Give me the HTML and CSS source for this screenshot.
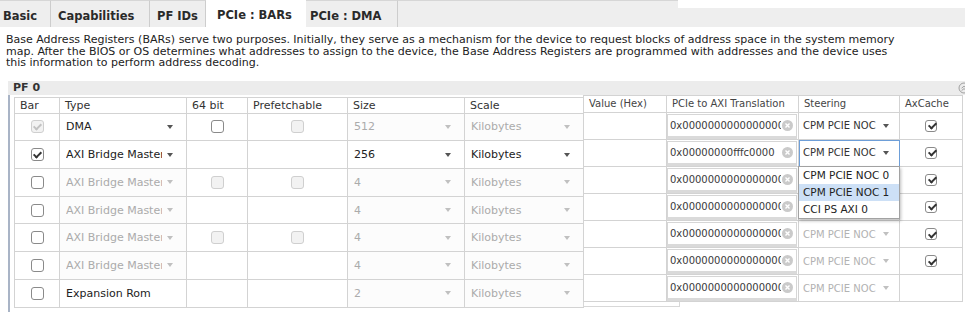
FILE: index.html
```html
<!DOCTYPE html>
<html lang="en">
<head>
  <meta charset="UTF-8" />
  <title>PCIe : BARs</title>
  <link rel="stylesheet" href="styles.css">
</head>
<body>

<div class="tab-bar">
  <div class="tab tab-basic">Basic</div>
  <div class="tab tab-caps">Capabilities</div>
  <div class="tab tab-ids">PF IDs</div>
  <div class="tab tab-bars active">PCIe : BARs</div>
  <div class="tab tab-dma">PCIe : DMA</div>
  <div class="tab-fill"></div>
  <div class="tab-fill tab-fill-alt"></div>
</div>

<p class="intro">Base Address Registers (BARs) serve two purposes. Initially, they serve as a mechanism for the device to request blocks of address space in the system memory<br>map. After the BIOS or OS determines what addresses to assign to the device, the Base Address Registers are programmed with addresses and the device uses<br>this information to perform address decoding.</p>

<div class="pf-head">
  <span>PF 0</span>
  <svg class="collapse" width="8" height="12" viewBox="0 0 8 12"><circle cx="7" cy="6" r="5" fill="none" stroke="#a0a0a0"/><path d="M4.6 6.2l2.4-2 2.4 2M4.6 8.6l2.4-2 2.4 2" fill="none" stroke="#a0a0a0"/></svg>
</div>

<div class="pf-body">
  <!-- Bar / Type / 64 bit / Prefetchable / Size / Scale -->
  <div class="bars">
    <div class="cell head">Bar</div>
    <div class="cell head">Type</div>
    <div class="cell head">64 bit</div>
    <div class="cell head">Prefetchable</div>
    <div class="cell head">Size</div>
    <div class="cell head">Scale</div>

    <div class="cell center"><span class="cb off on"></span></div>
    <div class="cell sel"><span class="txt">DMA</span><i class="caret"></i></div>
    <div class="cell center"><span class="cb"></span></div>
    <div class="cell center"><span class="cb off"></span></div>
    <div class="cell sel off"><span class="txt">512</span><i class="caret"></i></div>
    <div class="cell sel off"><span class="txt">Kilobytes</span><i class="caret"></i></div>

    <div class="cell center"><span class="cb on"></span></div>
    <div class="cell sel"><span class="txt">AXI Bridge Master</span><i class="caret"></i></div>
    <div class="cell"></div>
    <div class="cell"></div>
    <div class="cell sel"><span class="txt">256</span><i class="caret"></i></div>
    <div class="cell sel"><span class="txt">Kilobytes</span><i class="caret"></i></div>

    <div class="cell center"><span class="cb"></span></div>
    <div class="cell sel off"><span class="txt">AXI Bridge Master</span><i class="caret"></i></div>
    <div class="cell center"><span class="cb off"></span></div>
    <div class="cell center"><span class="cb off"></span></div>
    <div class="cell sel off"><span class="txt">4</span><i class="caret"></i></div>
    <div class="cell sel off"><span class="txt">Kilobytes</span><i class="caret"></i></div>

    <div class="cell center"><span class="cb"></span></div>
    <div class="cell sel off"><span class="txt">AXI Bridge Master</span><i class="caret"></i></div>
    <div class="cell"></div>
    <div class="cell"></div>
    <div class="cell sel off"><span class="txt">4</span><i class="caret"></i></div>
    <div class="cell sel off"><span class="txt">Kilobytes</span><i class="caret"></i></div>

    <div class="cell center"><span class="cb"></span></div>
    <div class="cell sel off"><span class="txt">AXI Bridge Master</span><i class="caret"></i></div>
    <div class="cell center"><span class="cb off"></span></div>
    <div class="cell center"><span class="cb off"></span></div>
    <div class="cell sel off"><span class="txt">4</span><i class="caret"></i></div>
    <div class="cell sel off"><span class="txt">Kilobytes</span><i class="caret"></i></div>

    <div class="cell center"><span class="cb"></span></div>
    <div class="cell sel off"><span class="txt">AXI Bridge Master</span><i class="caret"></i></div>
    <div class="cell"></div>
    <div class="cell"></div>
    <div class="cell sel off"><span class="txt">4</span><i class="caret"></i></div>
    <div class="cell sel off"><span class="txt">Kilobytes</span><i class="caret"></i></div>

    <div class="cell center"><span class="cb"></span></div>
    <div class="cell plain">Expansion Rom</div>
    <div class="cell"></div>
    <div class="cell"></div>
    <div class="cell sel off"><span class="txt">2</span><i class="caret"></i></div>
    <div class="cell sel off"><span class="txt">Kilobytes</span><i class="caret"></i></div>
  </div>

  <!-- Value / Translation / Steering / AxCache -->
  <div class="ext">
    <div class="bars-ext">
      <div class="cell ext-head">Value (Hex)</div>
      <div class="cell ext-head">PCIe to AXI Translation</div>
      <div class="cell ext-head">Steering</div>
      <div class="cell ext-head">AxCache</div>

      <div class="cell"></div>
      <div class="cell addr-cell"><div class="addr"><span>0x0000000000000000</span><svg class="clear" width="11" height="11" viewBox="0 0 11 11"><circle cx="5.5" cy="5.5" r="5.5" fill="#cacaca"/><path d="M3.5 3.5l4 4M7.5 3.5l-4 4" stroke="#fff" stroke-width="1.4"/></svg></div></div>
      <div class="cell sel steer"><span class="txt">CPM PCIE NOC</span><i class="caret"></i></div>
      <div class="cell center"><span class="cb sm on"></span></div>

      <div class="cell"></div>
      <div class="cell addr-cell"><div class="addr"><span>0x00000000fffc0000</span><svg class="clear" width="11" height="11" viewBox="0 0 11 11"><circle cx="5.5" cy="5.5" r="5.5" fill="#cacaca"/><path d="M3.5 3.5l4 4M7.5 3.5l-4 4" stroke="#fff" stroke-width="1.4"/></svg></div></div>
      <div class="cell sel steer focus">
        <span class="txt">CPM PCIE NOC</span><i class="caret"></i>
        <div class="menu">
          <div>CPM PCIE NOC 0</div>
          <div class="hi">CPM PCIE NOC 1</div>
          <div>CCI PS AXI 0</div>
        </div>
      </div>
      <div class="cell center"><span class="cb sm on"></span></div>

      <div class="cell"></div>
      <div class="cell addr-cell"><div class="addr"><span>0x0000000000000000</span><svg class="clear" width="11" height="11" viewBox="0 0 11 11"><circle cx="5.5" cy="5.5" r="5.5" fill="#cacaca"/><path d="M3.5 3.5l4 4M7.5 3.5l-4 4" stroke="#fff" stroke-width="1.4"/></svg></div></div>
      <div class="cell sel steer off"><span class="txt">CPM PCIE NOC</span><i class="caret"></i></div>
      <div class="cell center"><span class="cb sm on"></span></div>

      <div class="cell"></div>
      <div class="cell addr-cell"><div class="addr"><span>0x0000000000000000</span><svg class="clear" width="11" height="11" viewBox="0 0 11 11"><circle cx="5.5" cy="5.5" r="5.5" fill="#cacaca"/><path d="M3.5 3.5l4 4M7.5 3.5l-4 4" stroke="#fff" stroke-width="1.4"/></svg></div></div>
      <div class="cell sel steer off"><span class="txt">CPM PCIE NOC</span><i class="caret"></i></div>
      <div class="cell center"><span class="cb sm on"></span></div>

      <div class="cell"></div>
      <div class="cell addr-cell"><div class="addr"><span>0x0000000000000000</span><svg class="clear" width="11" height="11" viewBox="0 0 11 11"><circle cx="5.5" cy="5.5" r="5.5" fill="#cacaca"/><path d="M3.5 3.5l4 4M7.5 3.5l-4 4" stroke="#fff" stroke-width="1.4"/></svg></div></div>
      <div class="cell sel steer off"><span class="txt">CPM PCIE NOC</span><i class="caret"></i></div>
      <div class="cell center"><span class="cb sm on"></span></div>

      <div class="cell"></div>
      <div class="cell addr-cell"><div class="addr"><span>0x0000000000000000</span><svg class="clear" width="11" height="11" viewBox="0 0 11 11"><circle cx="5.5" cy="5.5" r="5.5" fill="#cacaca"/><path d="M3.5 3.5l4 4M7.5 3.5l-4 4" stroke="#fff" stroke-width="1.4"/></svg></div></div>
      <div class="cell sel steer off"><span class="txt">CPM PCIE NOC</span><i class="caret"></i></div>
      <div class="cell center"><span class="cb sm on"></span></div>

      <div class="cell"></div>
      <div class="cell addr-cell"><div class="addr"><span>0x0000000000000000</span><svg class="clear" width="11" height="11" viewBox="0 0 11 11"><circle cx="5.5" cy="5.5" r="5.5" fill="#cacaca"/><path d="M3.5 3.5l4 4M7.5 3.5l-4 4" stroke="#fff" stroke-width="1.4"/></svg></div></div>
      <div class="cell sel steer off"><span class="txt">CPM PCIE NOC</span><i class="caret"></i></div>
      <div class="cell"></div>
    </div>
    <div class="ext-foot"></div>
  </div>
</div>

</body>
</html>
```

FILE: styles.css
```css
body {
  margin: 0;
  width: 965px;
  height: 312px;
  overflow: hidden;
  background: #fff;
  color: #222;
  font-family: "DejaVu Sans", "Noto Sans", sans-serif;
  font-size: 11px;
}

/* Tabs */
.tab-bar {
  display: flex;
  height: 27px;
}
.tab {
  box-sizing: border-box;
  padding-top: 8px;
  line-height: 14px;
  background: #eeeeee;
  border-top: 1px solid #d6d6d6;
  border-right: 1px solid #cdcdcd;
  font-size: 11.5px;
  font-weight: bold;
  color: #2a2a2a;
  white-space: nowrap;
}
.tab-basic { width: 51px; padding-left: 3px; }
.tab-caps { width: 99px; padding-left: 7px; }
.tab-ids { width: 56px; padding-left: 7px; }
.tab-bars { width: 95px; padding-left: 6px; }
.tab-dma { width: 92px; padding-left: 4px; }
.tab.active {
  margin: 3px 0 0 5px;
  padding-top: 5px;
  background: #fff;
  border-top: none;
  border-right: none;
}
.tab-fill {
  flex: 1;
  background: #eeeeee;
  border-top: 1px solid #d6d6d6;
}
.tab-fill-alt {
  flex: none;
  width: 287px;
  border-top: 8px solid #fff;
}

.intro {
  margin: 7px 0 0;
  padding-left: 6px;
  font-size: 11px;
  line-height: 11.5px;
  color: #222;
  white-space: nowrap;
}

/* PF section */
.pf-head {
  display: flex;
  align-items: center;
  height: 14px;
  margin: 12px 0 0 8px;
  padding-left: 5px;
  background: #ececec;
  font-weight: bold;
  color: #333;
}
.pf-head .collapse {
  margin-left: auto;
}
.pf-body {
  display: flex;
  align-items: flex-start;
  height: 218px;
  margin-left: 8px;
  padding-left: 4px;
  border-left: 2px solid #a9b4c6;
}

.bars {
  display: grid;
  grid-template-columns: 45px 127px 61px 100px 117px 119px;
  grid-template-rows: 16px repeat(7, 27.72px);
  margin-top: 2px;
  border-top: 1px solid #d3d3d3;
  border-left: 1px solid #d3d3d3;
}
.ext {
  margin-left: -1px;
}
.bars-ext {
  display: grid;
  grid-template-columns: 83px 132px 101px 63px;
  grid-template-rows: 17px repeat(7, 27.14px);
  border-top: 1px solid #d3d3d3;
  border-left: 1px solid #d3d3d3;
}
.ext-foot {
  width: 95px;
  height: 4px;
  border: 1px solid #d8d8d8;
  border-top: none;
}

.cell {
  box-sizing: border-box;
  display: flex;
  align-items: center;
  min-width: 0;
  border-right: 1px solid #d3d3d3;
  border-bottom: 1px solid #d3d3d3;
  white-space: nowrap;
}
.head {
  padding-left: 5px;
  color: #333;
}
.ext-head {
  padding-left: 5px;
  font-size: 10px;
  color: #444;
}
.center {
  justify-content: center;
}
.plain {
  padding-left: 6px;
}

/* select-like cells */
.sel {
  padding: 0 13px 0 6px;
}
.sel .txt {
  flex: 1;
  overflow: hidden;
}
.sel.off {
  background: #fcfcfc;
  color: #ababab;
}
.caret {
  flex: none;
  width: 0;
  height: 0;
  margin-left: 5px;
  border-left: 3.5px solid transparent;
  border-right: 3.5px solid transparent;
  border-top: 4px solid #555;
}
.sel.off .caret {
  border-top-color: #c0c0c0;
}

.steer {
  position: relative;
  padding: 0 11px 0 4px;
  font-size: 10px;
  color: #333;
}
.steer .txt {
  flex: none;
  width: 80px;
}
.steer .caret {
  margin-left: 0;
}
.steer.off {
  background: #fff;
  color: #b2b2b2;
}
.focus {
  outline: 1px solid #6d9ed8;
  outline-offset: -1px;
}
.menu {
  position: absolute;
  top: 100%;
  left: -1px;
  z-index: 2;
  width: 100px;
  background: #fff;
  border: 1px solid #a2a2a2;
  box-shadow: 1px 2px 3px rgba(0,0,0,0.25);
  font-size: 10.5px;
  color: #222;
}
.menu div {
  height: 17px;
  line-height: 17px;
  padding-left: 4px;
}
.menu .hi {
  background: #cde0f6;
}

/* translation inputs */
.addr-cell {
  align-items: stretch;
  padding: 1px 1px 0 0;
}
.addr {
  flex: 1;
  display: flex;
  align-items: center;
  min-width: 0;
  padding-left: 2px;
  background: #fff;
  border: 1px solid #d6d6d6;
  border-bottom: 3px solid #dadada;
  font-size: 10px;
  color: #3a3a3a;
}
.addr span {
  flex: 1;
  overflow: hidden;
}
.addr .clear {
  flex: none;
  margin: 0 3px 0 1px;
}

/* checkboxes */
.cb {
  position: relative;
  box-sizing: border-box;
  width: 13px;
  height: 13px;
  border: 1px solid #8a8a8a;
  border-radius: 3px;
  background: #fff;
}
.cb.sm {
  width: 12px;
  height: 12px;
}
.cb.off {
  border-color: #cfcfcf;
  background: #f2f2f2;
}
.cb.on::after {
  content: "";
  position: absolute;
  left: 3.5px;
  top: 0.5px;
  width: 3px;
  height: 6px;
  border: solid #333;
  border-width: 0 2px 2px 0;
  transform: rotate(45deg);
}
.cb.off.on::after {
  border-color: #c2c2c2;
}
```
